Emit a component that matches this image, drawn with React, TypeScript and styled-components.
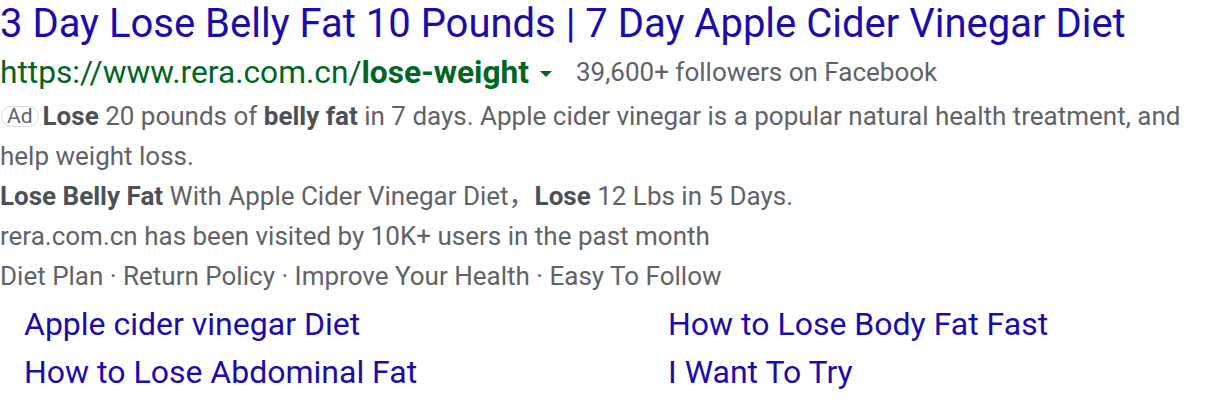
import React from "react";
import styled, { createGlobalStyle } from "styled-components";

const Global = createGlobalStyle`
  html, body { margin: 0; padding: 0; background: #fff; }
  body { font-family: Roboto, "Noto Sans CJK SC", "Noto Sans", Arial, sans-serif; }
`;

const Wrap = styled.div`
  width: 1216px;
  box-sizing: border-box;
`;

const Title = styled.a`
  display: block;
  font-size: 40px;
  line-height: 48px;
  color: #1a0dab;
  text-decoration: none;
  white-space: nowrap;
`;

const UrlRow = styled.div`
  display: flex;
  align-items: center;
  height: 48px;
  white-space: nowrap;
`;

const Url = styled.span`
  font-size: 31.7px;
  color: #006621;
  b { font-weight: 700; }
`;

const Caret = styled.span`
  width: 0;
  height: 0;
  margin: 4px 0 0 11px;
  border-left: 6px solid transparent;
  border-right: 6px solid transparent;
  border-top: 6px solid #006621;
`;

const Followers = styled.span`
  margin-left: 24px;
  font-size: 26px;
  color: #5f6368;
`;

const Desc = styled.div`
  font-size: 26px;
  line-height: 40px;
  color: #5f6368;
  b { font-weight: 700; color: #4d5156; }
`;

const Badge = styled.span`
  display: inline-block;
  font-size: 21px;
  line-height: 19px;
  padding: 0 5px;
  margin: 0 4px 0 1px;
  border: 1px solid #d9dadc;
  border-radius: 11px;
  color: #5f6368;
  vertical-align: 2px;
`;

const Sitelinks = styled.div`
  display: grid;
  grid-template-columns: 644px 1fr;
  padding-left: 24px;
  margin-top: 4px;
`;

const Sitelink = styled.a`
  font-size: 32px;
  line-height: 48px;
  color: #1a0dab;
  text-decoration: none;
  white-space: nowrap;
`;

export default function App() {
  return (
    <Wrap>
      <Global />
      <Title href="#">3 Day Lose Belly Fat 10 Pounds | 7 Day Apple Cider Vinegar Diet</Title>
      <UrlRow>
        <Url>https://www.rera.com.cn/<b>lose-weight</b></Url>
        <Caret />
        <Followers>39,600+ followers on Facebook</Followers>
      </UrlRow>
      <Desc>
        <Badge>Ad</Badge><b>Lose</b> 20 pounds of <b>belly fat</b> in 7 days. Apple cider vinegar is a popular natural health treatment, and help weight loss.
      </Desc>
      <Desc>
        <b>Lose Belly Fat</b> With Apple Cider Vinegar Diet，<b>Lose</b> 12 Lbs in 5 Days.
      </Desc>
      <Desc>rera.com.cn has been visited by 10K+ users in the past month</Desc>
      <Desc>Diet Plan · Return Policy · Improve Your Health · Easy To Follow</Desc>
      <Sitelinks>
        <Sitelink href="#">Apple cider vinegar Diet</Sitelink>
        <Sitelink href="#">How to Lose Body Fat Fast</Sitelink>
        <Sitelink href="#">How to Lose Abdominal Fat</Sitelink>
        <Sitelink href="#">I Want To Try</Sitelink>
      </Sitelinks>
    </Wrap>
  );
}
